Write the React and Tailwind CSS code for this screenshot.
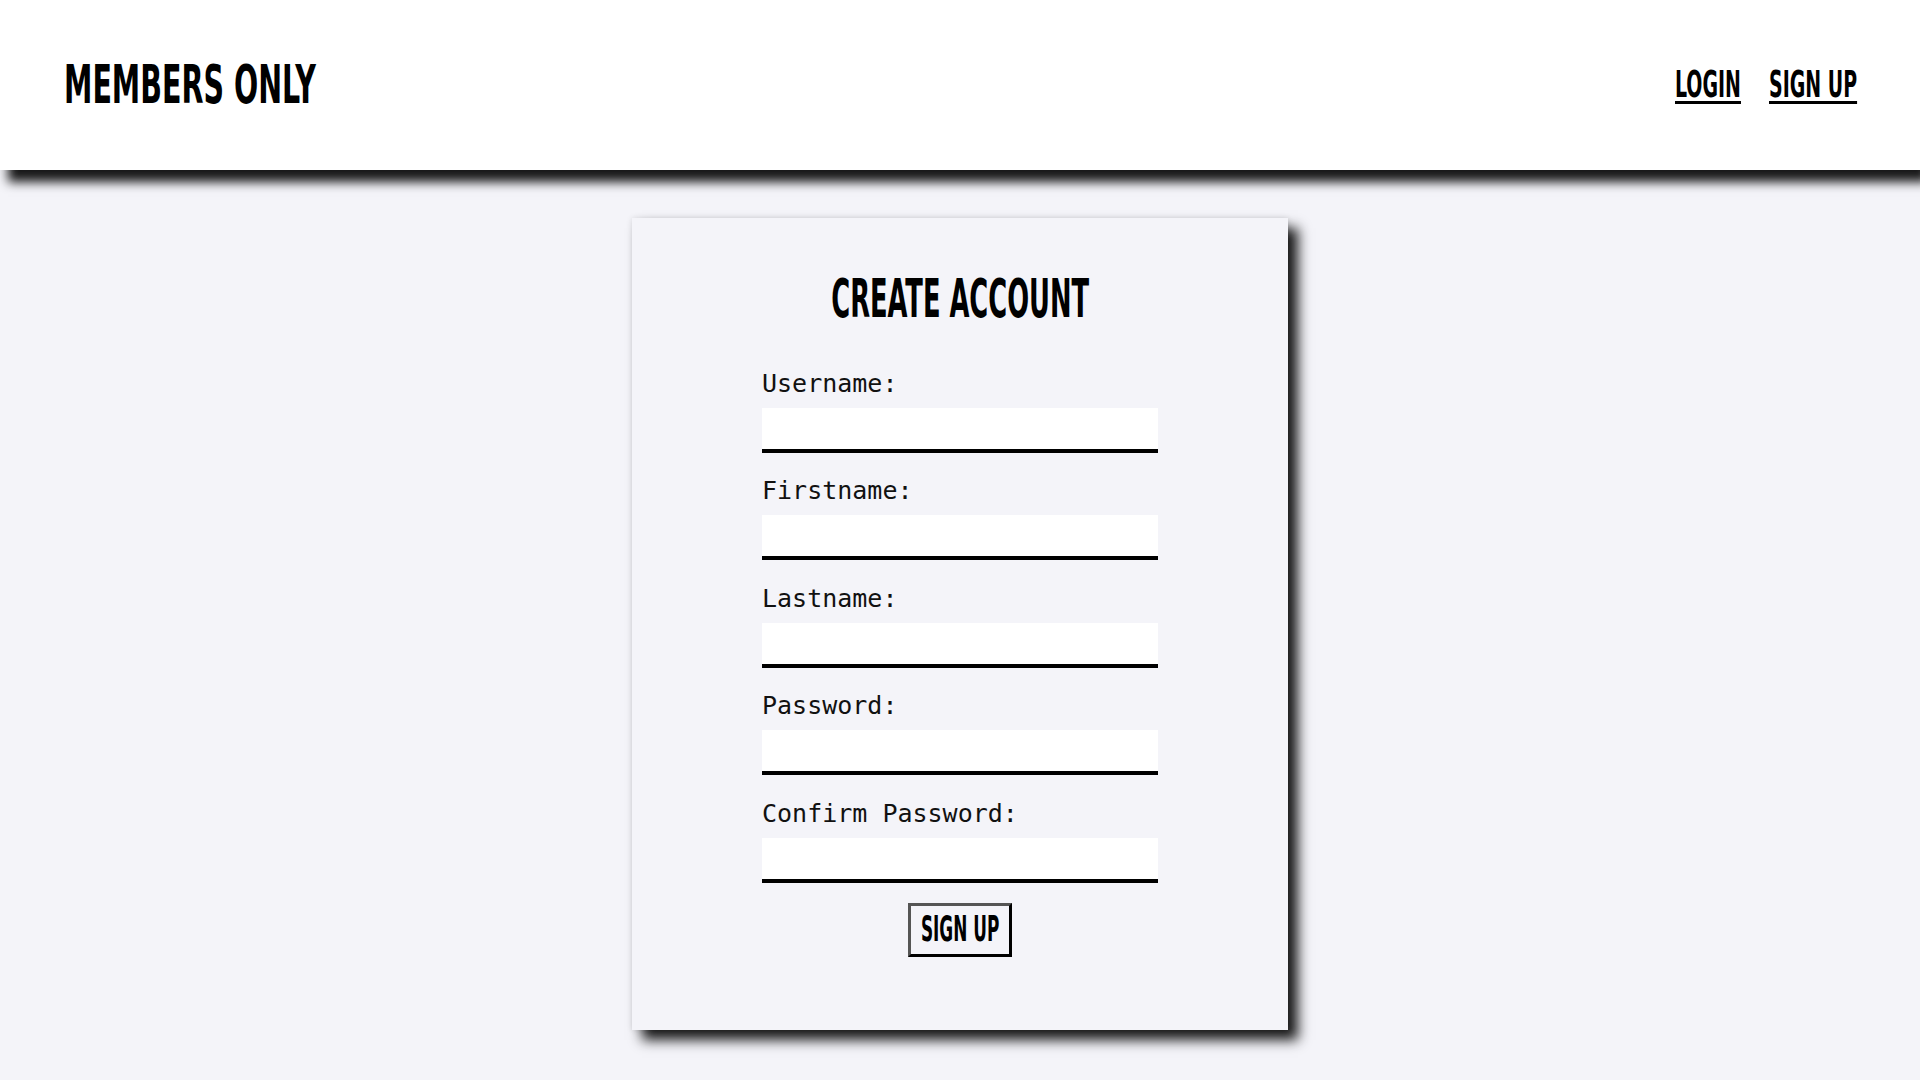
const DISPLAY = { fontFamily: '"Liberation Sans Narrow", "DejaVu Sans Condensed", "Liberation Sans", sans-serif' }
const MONO = { fontFamily: '"DejaVu Sans Mono", "Liberation Mono", monospace' }

const FIELDS = [
  { id: 'username', label: 'Username:', type: 'text' },
  { id: 'firstname', label: 'Firstname:', type: 'text' },
  { id: 'lastname', label: 'Lastname:', type: 'text' },
  { id: 'password', label: 'Password:', type: 'password' },
  { id: 'confirm', label: 'Confirm Password:', type: 'password' },
]

function NavLink({ children, width }) {
  return (
    <a href="#" className={`inline-block whitespace-nowrap ${width}`}>
      <span className="inline-block origin-left scale-x-[0.555] text-[38px] leading-none font-bold text-black underline decoration-[3px] underline-offset-[4px]" style={DISPLAY}>
        {children}
      </span>
    </a>
  )
}

export default function App() {
  return (
    <div className="min-h-screen bg-[#f4f4f9]">
      {/* Header */}
      <header className="relative z-10 h-[170px] bg-white flex items-start justify-between px-[64px] shadow-[8px_12px_10px_rgba(0,0,0,0.9)]">
        <div className="mt-[58px] w-[250px] whitespace-nowrap">
          <span className="inline-block origin-left scale-x-[0.587] text-[54px] leading-none font-bold text-black" style={DISPLAY}>
            MEMBERS ONLY
          </span>
        </div>
        <nav className="mt-[65px] flex gap-[28px]">
          <NavLink width="w-[66px]">LOGIN</NavLink>
          <NavLink width="w-[87px]">SIGN UP</NavLink>
        </nav>
      </header>

      {/* Form card */}
      <main className="flex justify-center pt-[48px] pb-[60px]">
        <div className="w-[656px] bg-[#f4f4f9] flex flex-col items-center pt-[54px] pb-[73px] shadow-[10px_10px_12px_rgba(0,0,0,0.9),0_0_6px_rgba(0,0,0,0.12)]">
          <h1 className="h-[54px] flex justify-center whitespace-nowrap">
            <span className="inline-block scale-x-[0.53] text-[54px] leading-none font-bold text-black" style={DISPLAY}>
              CREATE ACCOUNT
            </span>
          </h1>

          <form className="mt-[43px] w-[396px] flex flex-col items-stretch" onSubmit={e => e.preventDefault()}>
            <div className="flex flex-col gap-[23.4px]">
              {FIELDS.map(f => (
                <div key={f.id} className="flex flex-col">
                  <label htmlFor={f.id} className="text-[25px] leading-[30px] text-[#111]" style={MONO}>
                    {f.label}
                  </label>
                  <input
                    id={f.id}
                    type={f.type}
                    className="mt-[9px] h-[45px] w-full bg-white border-0 border-b-4 border-black outline-none px-2"
                  />
                </div>
              ))}
            </div>

            <div className="mt-[20px] flex justify-center">
              <button
                type="submit"
                className="w-[104px] h-[54px] flex items-center justify-center bg-transparent border-[3px] border-solid border-[#555] border-r-black border-b-black overflow-visible"
              >
                <span className="inline-block whitespace-nowrap scale-x-[0.536] text-[35px] leading-none font-bold text-black" style={DISPLAY}>
                  SIGN UP
                </span>
              </button>
            </div>
          </form>
        </div>
      </main>
    </div>
  )
}
